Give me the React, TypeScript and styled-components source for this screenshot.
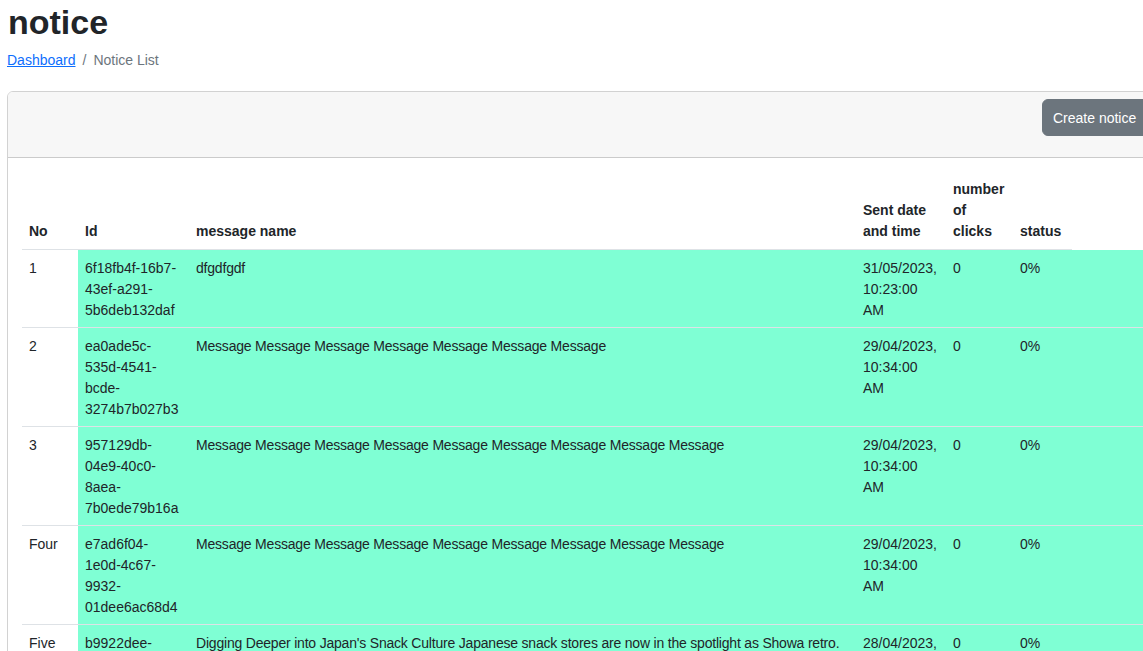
import React from "react";
import styled, { createGlobalStyle } from "styled-components";

const GlobalStyle = createGlobalStyle`
  html, body {
    margin: 0;
    overflow: hidden;
    background: #fff;
    color: #212529;
    font-family: "Liberation Sans", Arial, sans-serif;
    font-size: 14px;
    line-height: 21px;
  }
`;

const Page = styled.div`
  padding: 0 7px;
  width: 1157px;
`;

const Title = styled.h1`
  margin: 0;
  padding-left: 1px;
  font-size: 34px;
  line-height: 44px;
  font-weight: 600;
  color: #212529;
`;

const Breadcrumb = styled.nav`
  display: flex;
  align-items: center;
  margin-top: 6px;
  color: #6c757d;
`;

const Crumb = styled.a`
  color: #0d6efd;
  text-decoration: underline;
`;

const Divider = styled.span`
  padding: 0 7px;
  color: #6c757d;
`;

const Card = styled.div`
  margin-top: 20px;
  border: 1px solid rgba(0, 0, 0, 0.175);
  border-radius: 6px;
  box-sizing: border-box;
`;

const CardHeader = styled.div`
  display: flex;
  justify-content: flex-end;
  align-items: flex-start;
  height: 66px;
  box-sizing: border-box;
  padding: 7px 14px;
  background: #f7f7f7;
  border-bottom: 1px solid rgba(0, 0, 0, 0.175);
  border-radius: 5px 5px 0 0;
`;

const Button = styled.button`
  width: 107px;
  height: 37px;
  padding: 8px 10px 6px;
  border: 1px solid #6c757d;
  border-radius: 6px;
  background: #6c757d;
  color: #fff;
  font-family: inherit;
  font-size: 14px;
  line-height: 21px;
  text-align: left;
  white-space: nowrap;
`;

const CardBody = styled.div`
  padding: 14px;
`;

const Table = styled.table`
  width: 1127px;
  table-layout: fixed;
  border-collapse: collapse;
`;

const Th = styled.th`
  padding: 7px;
  text-align: left;
  vertical-align: bottom;
  font-weight: 700;
  border-bottom: 1px solid #dee2e6;
`;

const Td = styled.td<{ $plain?: boolean; $tight?: boolean }>`
  padding: 8px 7px 6px;
  vertical-align: top;
  background: ${(p) => (p.$plain ? "#fff" : "#7fffd4")};
  border-bottom: 1px solid #dee2e6;
  letter-spacing: ${(p) => (p.$tight ? "-0.2px" : "normal")};
`;

const widths = [56, 111, 667, 90, 67, 59, 77];

const msg = (n: number) => Array(n).fill("Message").join(" ");

const rows = [
  { no: "1", id: "6f18fb4f-16b7-43ef-a291-5b6deb132daf", name: "dfgdfgdf", sent: "31/05/2023, 10:23:00 AM" },
  { no: "2", id: "ea0ade5c-535d-4541-bcde-3274b7b027b3", name: msg(7), sent: "29/04/2023, 10:34:00 AM" },
  { no: "3", id: "957129db-04e9-40c0-8aea-7b0ede79b16a", name: msg(9), sent: "29/04/2023, 10:34:00 AM" },
  { no: "Four", id: "e7ad6f04-1e0d-4c67-9932-01dee6ac68d4", name: msg(9), sent: "29/04/2023, 10:34:00 AM" },
  {
    no: "Five",
    id: "b9922dee-4a1c-4f2b-9d3e-6b1f0c7a2e51",
    name: "Digging Deeper into Japan's Snack Culture Japanese snack stores are now in the spotlight as Showa retro.",
    sent: "28/04/2023, 10:34:00 AM",
  },
];

export default function App() {
  return (
    <>
      <GlobalStyle />
      <Page>
        <Title>notice</Title>
        <Breadcrumb>
          <Crumb href="#">Dashboard</Crumb>
          <Divider>/</Divider>
          <span>Notice List</span>
        </Breadcrumb>
        <Card>
          <CardHeader>
            <Button>Create notice</Button>
          </CardHeader>
          <CardBody>
            <Table>
              <colgroup>
                {widths.map((w, i) => (
                  <col key={i} style={{ width: w }} />
                ))}
              </colgroup>
              <thead>
                <tr>
                  <Th>No</Th>
                  <Th>Id</Th>
                  <Th>message name</Th>
                  <Th>Sent date and time</Th>
                  <Th>number of clicks</Th>
                  <Th>status</Th>
                </tr>
              </thead>
              <tbody>
                {rows.map((r) => (
                  <tr key={r.id}>
                    <Td $plain>{r.no}</Td>
                    <Td>{r.id}</Td>
                    <Td $tight>{r.name}</Td>
                    <Td>{r.sent}</Td>
                    <Td>0</Td>
                    <Td>0%</Td>
                    <Td />
                  </tr>
                ))}
              </tbody>
            </Table>
          </CardBody>
        </Card>
      </Page>
    </>
  );
}
